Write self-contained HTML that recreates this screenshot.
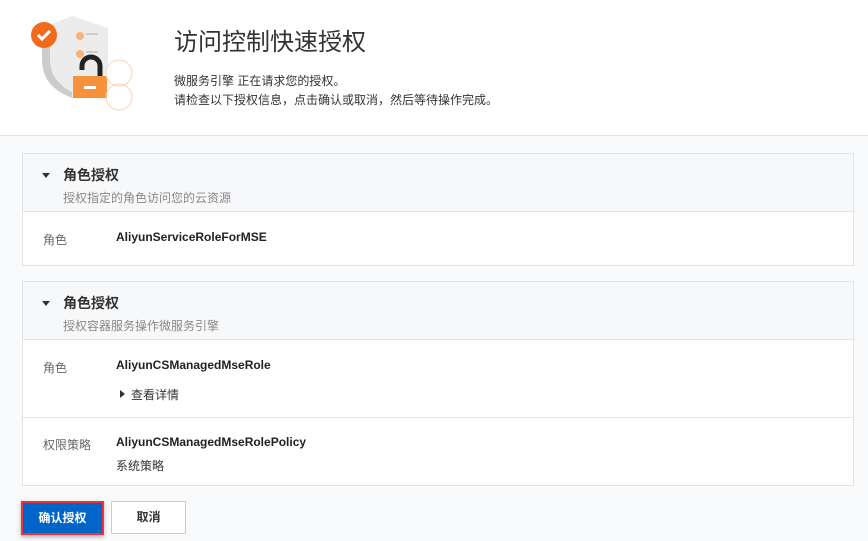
<!DOCTYPE html><html><head><meta charset="utf-8"><style>
body{margin:0;width:868px;height:541px;background:#f9fafb;font-family:"Liberation Sans","Noto Sans CJK SC",sans-serif;color:#333;overflow:hidden;position:relative}
.top{position:absolute;left:0;top:0;width:868px;height:135px;background:#fff;border-bottom:1px solid #e5e5e5}
.card{position:absolute;left:22px;width:830px;background:#fff;border:1px solid #e3e3e3}
.hd{background:#f7f8fa;border-bottom:1px solid #e3e3e3;height:57px;position:relative}
.hd b{position:absolute;left:40px;top:11px;font-size:14px;color:#333}
.hd span{position:absolute;left:40px;top:35px;font-size:12px;color:#888}
.hd i{position:absolute;left:19px;top:19px;border:4px solid transparent;border-top:5px solid #333}
.row{position:relative;border-bottom:1px solid #e3e3e3}
.row:last-child{border-bottom:none}
.lb{position:absolute;left:20px;font-size:12px;color:#666}
.v{position:absolute;left:93px;font-size:12px;font-weight:bold;color:#222}
.s{position:absolute;left:93px;font-size:12px;color:#333}
</style></head><body>
<div class="top">
<svg width="140" height="120" style="position:absolute;left:0;top:0">
<path d="M72 16 L108 28 V62 C104 84 90 92 72 98 C52 90 42 78 42 60 V28Z" fill="#ececec"/>
<path d="M50 32 V60 C50 76 60 86 72 92 L72 98 C52 90 42 78 42 60 V30Z" fill="#ccc"/>
<circle cx="44" cy="35" r="13" fill="#f26b1d"/><path d="M38 35 l4 4 l8-8" stroke="#fff" stroke-width="3" fill="none"/>
<circle cx="80" cy="36" r="4" fill="#f9b27a"/><circle cx="80" cy="54" r="4" fill="#f9b27a"/>
<rect x="86" y="33" width="12" height="2" fill="#ccc"/><rect x="86" y="51" width="12" height="2" fill="#ccc"/>
<path d="M82 70 V66 a9 9 0 0 1 18 0 V76" stroke="#222" stroke-width="5" fill="none"/>
<rect x="73" y="76" width="34" height="22" fill="#f7923c"/><rect x="84" y="86" width="12" height="3" fill="#fff"/>
<circle cx="119" cy="73" r="13" stroke="#fad2b5" fill="none"/><circle cx="119" cy="97" r="13" stroke="#fad2b5" fill="none"/>
</svg>
<div style="position:absolute;left:174px;top:22px;font-size:24px;color:#333">访问控制快速授权</div>
<div style="position:absolute;left:174px;top:72px;font-size:12px;color:#333;line-height:19px">微服务引擎 正在请求您的授权。<br>请检查以下授权信息，点击确认或取消，然后等待操作完成。</div>
</div>
<div class="card" style="top:153px">
<div class="hd"><i></i><b>角色授权</b><span>授权指定的角色访问您的云资源</span></div>
<div class="row" style="height:53px"><span class="lb" style="top:19px">角色</span><span class="v" style="top:18px">AliyunServiceRoleForMSE</span></div>
</div>
<div class="card" style="top:281px">
<div class="hd"><i></i><b>角色授权</b><span>授权容器服务操作微服务引擎</span></div>
<div class="row" style="height:77px"><span class="lb" style="top:19px">角色</span><span class="v" style="top:18px">AliyunCSManagedMseRole</span>
<span style="position:absolute;left:97px;top:50px;border:4px solid transparent;border-left:5px solid #333"></span><span class="s" style="left:108px;top:46px">查看详情</span></div>
<div class="row" style="height:67px"><span class="lb" style="top:18px">权限策略</span><span class="v" style="top:17px">AliyunCSManagedMseRolePolicy</span><span class="s" style="top:39px">系统策略</span></div>
</div>
<div style="position:absolute;left:21px;top:501px;width:79px;height:30px;background:#0064c8;border:2px solid #e8353d;color:#fff;font-size:12px;font-weight:bold;text-align:center;line-height:30px;box-shadow:0 2px 4px rgba(0,0,0,.3)">确认授权</div>
<div style="position:absolute;left:111px;top:501px;width:73px;height:31px;background:#fff;border:1px solid #ccc;color:#333;font-size:12px;font-weight:bold;text-align:center;line-height:31px">取消</div>
</body></html>
